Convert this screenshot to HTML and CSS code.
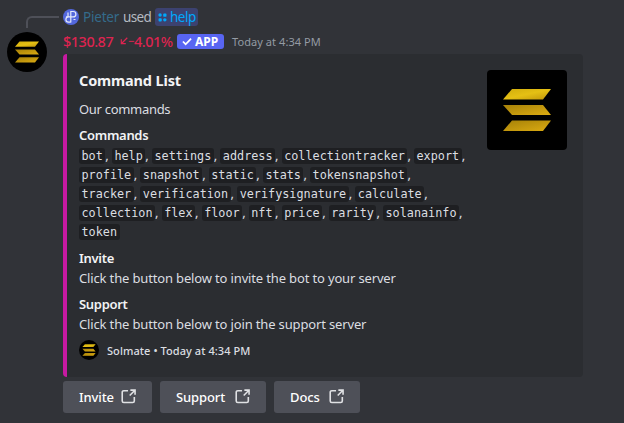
FILE: index.html
```html
<!DOCTYPE html>
<html lang="en">
<head>
<meta charset="utf-8">
<title>Command List</title>
<link rel="stylesheet" href="styles.css">
</head>
<body>
<svg class="defs" width="0" height="0" aria-hidden="true">
  <defs>
    <linearGradient id="gold" x1="0" y1="0" x2="1" y2="1">
      <stop offset="0" stop-color="#d0ac0c"/><stop offset=".5" stop-color="#e5c014"/><stop offset="1" stop-color="#c0960b"/>
    </linearGradient>
    <linearGradient id="gold-dark" x1="0" y1="0" x2="1" y2="1">
      <stop offset="0" stop-color="#a68108"/><stop offset="1" stop-color="#dbab12"/>
    </linearGradient>
    <symbol id="logo" viewBox="0 0 80 80">
      <path fill="url(#gold)" d="M25 19h39l-8 10.500H16z"/>
      <path fill="url(#gold-dark)" d="M16 35h40l8 10H25z"/>
      <path fill="url(#gold-dark)" d="M25 50.500h39l-8 10.500H16z"/>
    </symbol>
    <symbol id="external" viewBox="0 0 16 16">
      <path d="M7.500 1.800H3A1.700 1.700 0 0 0 1.300 3.500v9.200A1.700 1.700 0 0 0 3 14.400h9.500a1.700 1.700 0 0 0 1.700-1.700V8.500M10 1.200h5v5M14.600 1.600L9.300 6.900" fill="none" stroke="currentColor" stroke-width="1.700"/>
    </symbol>
  </defs>
</svg>
<main class="message">
  <div class="gutter">
    <span class="spine"></span>
    <svg class="avatar"><use href="#logo" width="40" height="40"/></svg>
  </div>
  <div class="content">
    <div class="reply">
      <svg class="user" viewBox="0 0 16 16"><circle cx="8" cy="8" r="8" fill="#5368dd"/><path d="M7.800 13.500V2.500h2.400a2.700 2.700 0 0 1 0 5.400H5.500a2.600 2.600 0 0 0 0 5.200h2.300M5 7.500V3.500M3 7.900h9M10.500 10.500h2" fill="none" stroke="#e4e9fa" stroke-width="1.200"/></svg>
      <span class="pieter">Pieter</span>
      <span class="used">used</span>
      <span class="command"><svg viewBox="0 0 10 10"><g fill="#00a8fc"><circle cx="2.300" cy="2.300" r="1.900"/><rect x="5.800" y=".6" width="3.600" height="3.600" rx="1"/><rect x=".6" y="5.800" width="3.600" height="3.600" rx="1"/><circle cx="7.600" cy="7.600" r="1.900"/></g></svg><span class="help">help</span></span>
    </div>
    <div class="header">
      <span class="price">$130.87</span>
      <svg class="down" viewBox="0 0 8 8"><path d="M7.300.8L1.500 6.500M1.300 2.200v4.500h4.500" fill="none" stroke="currentColor" stroke-width="1.200"/></svg>
      <span class="change"><span class="minus">−</span>4.01%</span>
      <span class="badge"><svg viewBox="0 0 11 9"><path d="M1 4.500l3 3L10 1.300" fill="none" stroke="#fff" stroke-width="1.900"/></svg><span>APP</span></span>
      <time class="time">Today at 4:34 PM</time>
    </div>
    <article class="embed">
      <div class="body">
        <h1 class="title">Command List</h1>
        <p class="lead">Our commands</p>
        <h2 class="field">Commands</h2>
        <p class="codes"><code>bot</code>,<code>help</code>,<code>settings</code>,<code>address</code>,<code>collectiontracker</code>,<code>export</code>,<br><code>profile</code>,<code>snapshot</code>,<code>static</code>,<code>stats</code>,<code>tokensnapshot</code>,<br><code>tracker</code>,<code>verification</code>,<code>verifysignature</code>,<code>calculate</code>,<br><code>collection</code>,<code>flex</code>,<code>floor</code>,<code>nft</code>,<code>price</code>,<code>rarity</code>,<code>solanainfo</code>,<br><code>token</code></p>
        <h2 class="field">Invite</h2>
        <p class="text">Click the button below to invite the bot to your server</p>
        <h2 class="field">Support</h2>
        <p class="text">Click the button below to join the support server</p>
        <footer class="footer"><svg><use href="#logo" x="-1" y="-1" width="22" height="22"/></svg><span>Solmate • Today at 4:34 PM</span></footer>
      </div>
      <svg class="thumb"><use href="#logo" width="80" height="80"/></svg>
    </article>
    <div class="buttons">
      <a class="button invite"><span>Invite</span><svg><use href="#external"/></svg></a>
      <a class="button support"><span>Support</span><svg><use href="#external"/></svg></a>
      <a class="button docs"><span>Docs</span><svg><use href="#external"/></svg></a>
    </div>
  </div>
</main>
</body>
</html>
```
FILE: styles.css
```css
* { box-sizing: border-box; }
body { margin: 0; height: 423px; overflow: hidden; background: #313338; color: #dbdee1; font: 13px "Noto Sans", sans-serif; }
h1, h2, p { margin: 0; }
svg { display: block; flex: none; }
.defs { position: absolute; }
span, time { white-space: nowrap; }
.message { display: flex; }
.gutter { width: 63px; flex: none; padding: 16px 0 0 7px; }
.spine { display: block; width: 33px; height: 12px; margin-left: 19px; border: 2px solid #4e5058; border-width: 2px 0 0 2px; border-radius: 6px 0 0 0; }
.avatar { width: 40px; height: 40px; margin-top: 4px; border-radius: 50%; background: #000; }
.content { width: 520px; flex: none; padding-top: 8px; }
.reply { display: flex; align-items: center; height: 18px; line-height: 18px; font-size: 13.500px; }
.user { width: 16px; height: 16px; }
.pieter { width: 40px; margin-left: 4px; color: #346b8b; letter-spacing: -.2px; }
.used { width: 32px; color: #b5bac1; letter-spacing: -.6px; }
.command { display: flex; align-items: center; width: 43px; height: 18px; padding-left: 3px; border-radius: 3px; background: #3c4270; color: #00a8fc; }
.command svg { width: 9px; height: 9px; margin-right: 3px; }
.help { letter-spacing: -.5px; }
.header { display: flex; align-items: center; height: 20px; margin-top: 5px; line-height: 20px; }
.price, .change { margin-top: -1px; font-size: 14.500px; font-weight: 500; color: #dd2450; }
.price { width: 57px; letter-spacing: -.5px; }
.down { width: 8px; height: 8px; margin-top: -1px; color: #dd2450; }
.change { display: flex; width: 49px; letter-spacing: -.5px; }
.minus { width: 6px; font-size: 11px; }
.badge { display: flex; align-items: center; gap: 3px; width: 47px; height: 15px; padding-left: 5px; border-radius: 3px; background: #5865f2; color: #fff; font-size: 12px; font-weight: 700; line-height: 15px; }
.badge svg { width: 10px; height: 9px; }
.time { margin: 2px 0 0 8px; font-size: 11px; letter-spacing: .07px; color: #949ba4; }
.embed { display: flex; height: 323px; margin-top: 3px; border-left: 4px solid #c71aa2; border-radius: 4px; background: #2b2d31; }
.body { width: 420px; flex: none; padding: 16px 0 0 12px; white-space: nowrap; }
.title { height: 21px; line-height: 21px; font-size: 14.500px; font-weight: 700; letter-spacing: -.15px; color: #f2f3f5; }
.lead { margin-top: 8px; line-height: 20px; letter-spacing: -.3px; }
.field { margin-top: 8px; height: 18px; line-height: 18px; font-size: 13px; font-weight: 600; letter-spacing: -.3px; color: #f2f3f5; }
.lead + .field { margin-top: 7px; }
.codes { line-height: 19px; margin-top: 2px; height: 95px; letter-spacing: 3.100px; }
.codes code { padding: 1px 2.500px; border-radius: 3px; background: #1e1f22; font: 11.800px "DejaVu Sans Mono", monospace; letter-spacing: 0; }
.text { line-height: 22px; height: 20px; letter-spacing: -.15px; }
.footer { display: flex; align-items: center; gap: 8px; height: 20px; margin-top: 7px; font-size: 11px; font-weight: 500; letter-spacing: .07px; }
.footer svg { width: 20px; height: 20px; border-radius: 50%; background: #000; }
.thumb { width: 80px; height: 80px; margin-top: 16px; border-radius: 4px; background: #000; }
.buttons { display: flex; gap: 8px; margin-top: 4px; }
.button { display: flex; align-items: center; justify-content: space-between; height: 32px; padding: 0 16px; border-radius: 3px; background: #4e5058; color: #fff; font-size: 13px; font-weight: 500; letter-spacing: -.1px; }
.button svg { width: 15px; height: 15px; margin-top: -1px; color: #e0e1e4; }
.invite { width: 89px; }
.support { width: 106px; }
.docs { width: 86px; }
```
